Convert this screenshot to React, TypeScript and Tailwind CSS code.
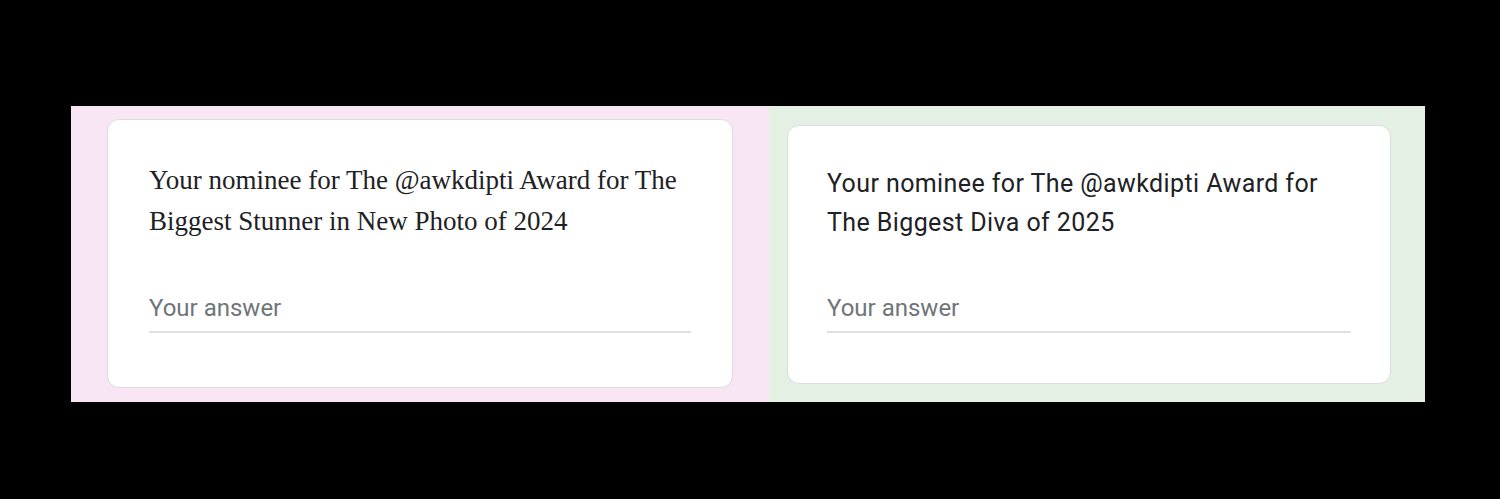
import React from 'react'

interface QuestionCardProps {
  title: string
  serif?: boolean
  className?: string
}

// Short-answer question card, styled after a Google Forms item
const QuestionCard = ({ title, serif, className }: QuestionCardProps) => (
  <div className={`bg-white border border-[#dadce0] rounded-[12px] ${className ?? ''}`}>
    <p
      className={
        serif
          ? "font-['Liberation_Serif',serif] text-[27px] leading-[41px] text-[#202124]"
          : "font-['Roboto',sans-serif] text-[25px] leading-[39px] tracking-[0.4px] text-[#202124]"
      }
    >
      {title}
    </p>
    <div className="mt-[52px] border-b-2 border-[#e0e0e0] pb-[9px]">
      <span className="block font-['Roboto',sans-serif] text-[24px] leading-[28px] text-[#70757a]">
        Your answer
      </span>
    </div>
  </div>
)

export default function App() {
  return (
    <div className="w-[1500px] h-[499px] bg-black pt-[106px] pl-[71px]">
      <div className="flex h-[296px] w-[1354px]">
        <div className="w-[698px] bg-[#f8e6f5] pt-[13px] pl-[36px]">
          <QuestionCard
            serif
            title="Your nominee for The @awkdipti Award for The Biggest Stunner in New Photo of 2024"
            className="w-[626px] h-[269px] pt-[40px] px-[41px]"
          />
        </div>
        <div className="w-[656px] bg-[#e3f0e3] pt-[19px] pl-[18px]">
          <QuestionCard
            title="Your nominee for The @awkdipti Award for The Biggest Diva of 2025"
            className="w-[604px] h-[259px] pt-[38px] px-[39px]"
          />
        </div>
      </div>
    </div>
  )
}
